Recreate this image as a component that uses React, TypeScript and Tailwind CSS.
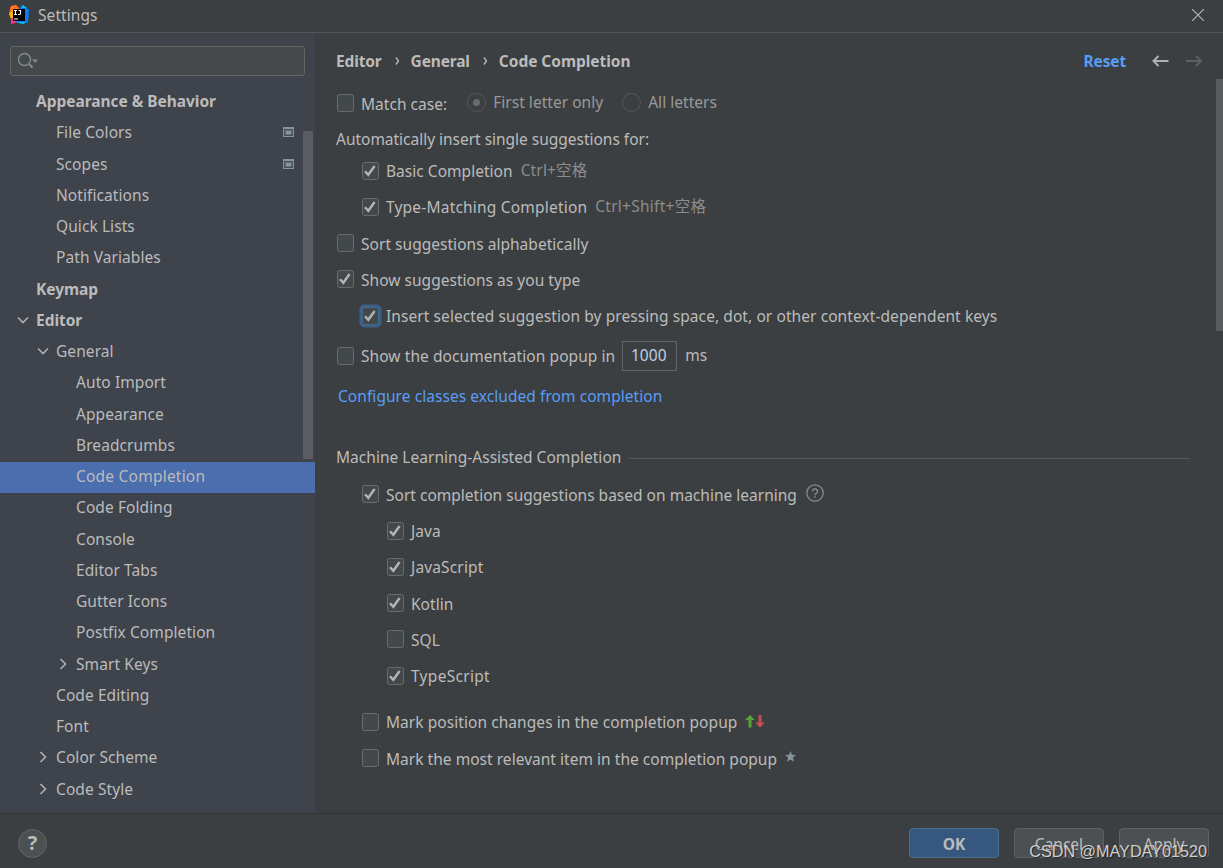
import clsx from 'clsx';
import type { ReactNode } from 'react';

interface TreeItem {
  label: string;
  level: number;
  bold?: boolean;
  arrow?: 'open' | 'closed';
  project?: boolean;
  selected?: boolean;
}

const treeItems: TreeItem[] = [
  { label: 'Appearance & Behavior', level: 0, bold: true },
  { label: 'File Colors', level: 1, project: true },
  { label: 'Scopes', level: 1, project: true },
  { label: 'Notifications', level: 1 },
  { label: 'Quick Lists', level: 1 },
  { label: 'Path Variables', level: 1 },
  { label: 'Keymap', level: 0, bold: true },
  { label: 'Editor', level: 0, bold: true, arrow: 'open' },
  { label: 'General', level: 1, arrow: 'open' },
  { label: 'Auto Import', level: 2 },
  { label: 'Appearance', level: 2 },
  { label: 'Breadcrumbs', level: 2 },
  { label: 'Code Completion', level: 2, selected: true },
  { label: 'Code Folding', level: 2 },
  { label: 'Console', level: 2 },
  { label: 'Editor Tabs', level: 2 },
  { label: 'Gutter Icons', level: 2 },
  { label: 'Postfix Completion', level: 2 },
  { label: 'Smart Keys', level: 2, arrow: 'closed' },
  { label: 'Code Editing', level: 1 },
  { label: 'Font', level: 1 },
  { label: 'Color Scheme', level: 1, arrow: 'closed' },
  { label: 'Code Style', level: 1, arrow: 'closed' },
];

const levelPadding = ['pl-4', 'pl-9', 'pl-14'];

function Logo() {
  return (
    <svg width="20" height="20" viewBox="0 0 20 20">
      <path d="M1 2 7 0l5 4-3 13-6 2-1-6-2-3z" fill="#fe315d" />
      <path d="M2 1 7 0l3 4-6 4-3-1z" fill="#f97a12" />
      <path d="M0 8l4-2v7l-2 1z" fill="#fdb60d" />
      <path d="M2 13h5v4l-5 2z" fill="#ff318c" />
      <path d="M11 3 14 0l6 5-1 12-5 2-7-2z" fill="#087cfa" />
      <path d="M12 3 14 0l4 3z" fill="#07c3f2" />
      <path d="M7 17h10l-3 2z" fill="#07c3f2" />
      <path d="M4 4h12v12H4z" fill="#000" />
      <path d="M5 5.500h3M6.500 5.500v4M5 9.500h3M9.500 5.500h2v3q0 1-1.200 1H9M5 14h4" stroke="#fff" strokeWidth="1.100" fill="none" />
    </svg>
  );
}

function Arrow({ open }: { open: boolean }) {
  return (
    <svg width="14" height="14" viewBox="0 0 14 14" fill="none" stroke="#adadad" strokeWidth="1.700">
      <path d={open ? 'M2 4.500 7 9.500 12 4.500' : 'M4.500 2 9.500 7 4.500 12'} />
    </svg>
  );
}

function ProjectIcon() {
  return (
    <svg width="11" height="10" viewBox="0 0 11 10" className="mr-[21px]">
      <path d="M0 0h11v10H0z" fill="#87939a" />
      <path d="M1 2h9v7H1z" fill="#4a5058" />
      <path d="M2.500 3.500h6v4h-6z" fill="#87939a" />
    </svg>
  );
}

function Tree() {
  return (
    <div className="mt-[10.600px]">
      {treeItems.map((item, i) => (
        <div
          key={i}
          className={clsx(
            'flex h-[31.250px] items-center pb-0.5',
            levelPadding[item.level],
            item.selected && 'bg-[#4b6eaf]'
          )}
        >
          <span className="flex w-5 shrink-0">{item.arrow && <Arrow open={item.arrow === 'open'} />}</span>
          <span
            className={clsx(
              'flex-1',
              item.bold ? 'font-bold tracking-[-0.040px]' : item.selected ? 'tracking-[0.220px]' : 'tracking-[0.080px]'
            )}
          >
            {item.label}
          </span>
          {item.project && <ProjectIcon />}
        </div>
      ))}
    </div>
  );
}

function Sidebar() {
  return (
    <div className="relative w-[315px] shrink-0 overflow-hidden bg-[#3f434b] pt-[13px]">
      <div className="ml-2.5 flex h-[30px] w-[295px] items-center rounded-[3px] border border-[#646464] bg-[#45494a] pl-[7px]">
        <svg width="22" height="18" viewBox="0 0 22 18" fill="none">
          <circle cx="6.500" cy="7.500" r="6" stroke="#7f8b91" strokeWidth="1.400" />
          <path d="m11 12 3.500 3.500" stroke="#7f8b91" strokeWidth="2" />
          <path d="M14 7.500h6l-3 3.500z" fill="#7f8b91" />
        </svg>
      </div>
      <Tree />
      <div className="absolute top-[98px] left-[303px] h-[328px] w-2.5 bg-[#5a5d64]" />
    </div>
  );
}

function CheckBox({ checked, focused }: { checked?: boolean; focused?: boolean }) {
  return (
    <span
      className={clsx(
        'mr-px ml-[0.500px] flex h-[18px] w-[17.500px] shrink-0 items-center justify-center rounded-[2.500px] border bg-[#43494a]',
        focused ? 'border-[#43698e] ring-[2.500px] ring-[#3d6185]' : 'border-[#6b6b6b]'
      )}
    >
      {checked && (
        <svg width="14" height="14" viewBox="0 0 14 14" fill="none" stroke="#b4b4b4" strokeWidth="2.400">
          <path d="m2 7.300 3.300 3.500L11.600 2" />
        </svg>
      )}
    </span>
  );
}

interface OptionProps {
  label: string;
  checked?: boolean;
  focused?: boolean;
  className?: string;
  labelClass?: string;
  children?: ReactNode;
}

function Option({ label, checked, focused, className, labelClass, children }: OptionProps) {
  return (
    <div className={clsx('flex h-9 shrink-0 items-center', className)}>
      <CheckBox checked={checked} focused={focused} />
      <span className={clsx('ml-1.5', labelClass)}>{label}</span>
      {children}
    </div>
  );
}

function Radio({ label, selected }: { label: string; selected?: boolean }) {
  return (
    <span className="flex items-center text-[#999]">
      <span className="mr-[7px] flex h-[19px] w-[19px] items-center justify-center rounded-full border border-[#565656]">
        {selected && <span className="h-[7px] w-[7px] rounded-full bg-[#6b6b6b]" />}
      </span>
      <span className="pb-px">{label}</span>
    </span>
  );
}

function Chevron() {
  return (
    <svg width="5" height="8" viewBox="0 0 5 8" fill="none" stroke="#bbb" strokeWidth="1.300" className="mr-[11px] ml-[13px]">
      <path d="m1 .5 2.500 3.500L1 7.500" />
    </svg>
  );
}

function Breadcrumbs() {
  return (
    <div className="flex h-[52px] shrink-0 items-center pt-[3px] font-bold tracking-[-0.150px]">
      <span>Editor</span>
      <Chevron />
      <span>General</span>
      <Chevron />
      <span className="tracking-[-0.040px]">Code Completion</span>
      <span className="ml-auto text-[#589df6]">Reset</span>
      <svg width="52" height="16" viewBox="0 0 52 16" fill="none" strokeWidth="2" className="mr-5 ml-[25px]">
        <path d="M17.500 8h-15M7.500 3l-5 5 5 5" stroke="#afb1b3" />
        <path d="M35 8h15M45 3l5 5-5 5" stroke="#5d5f60" />
      </svg>
    </div>
  );
}

function CompletionPage() {
  return (
    <div className="relative flex flex-1 flex-col overflow-hidden pl-[21px]">
      <Breadcrumbs />
      <Option label="Match case:" labelClass="pt-px">
        <div className="ml-5 flex gap-[19px] pb-px">
          <Radio label="First letter only" selected />
          <Radio label="All letters" />
        </div>
      </Option>
      <div className="flex h-9 shrink-0 items-center tracking-[-0.020px]">
        Automatically insert single suggestions for:
      </div>
      <Option label="Basic Completion" checked className="-mt-1 ml-[25px]">
        <span className="ml-2 pb-0.5 tracking-[0.150px] text-[#8c8c8c]">Ctrl+空格</span>
      </Option>
      <Option label="Type-Matching Completion" checked className="ml-[25px]" labelClass="tracking-[0.200px]">
        <span className="ml-2 pb-0.5 tracking-[0.260px] text-[#8c8c8c]">Ctrl+Shift+空格</span>
      </Option>
      <Option label="Sort suggestions alphabetically" labelClass="pt-0.5" />
      <Option label="Show suggestions as you type" checked labelClass="pt-0.5" />
      <Option
        label="Insert selected suggestion by pressing space, dot, or other context-dependent keys"
        checked
        focused
        className="mt-px ml-[25px]"
        labelClass="tracking-[0.080px]"
      />
      <Option label="Show the documentation popup in" className="mt-1" labelClass="tracking-[0.070px]">
        <span className="ml-[7px] flex h-[30px] w-[55px] items-center justify-center border border-[#646464] pr-0.5 pb-0.5 text-[#bfd0e6]">
          1000
        </span>
        <span className="ml-2 pb-0.5">ms</span>
      </Option>
      <div className="mt-1 flex h-9 shrink-0 items-center pl-0.5 tracking-[0.060px] text-[#589df6]">
        Configure classes excluded from completion
      </div>

      <div className="mt-[26px] mr-[33px] flex h-9 shrink-0 items-center gap-2">
        <span className="pb-0.5">Machine Learning-Assisted Completion</span>
        <span className="h-px flex-1 bg-[#555758]" />
      </div>
      <Option
        label="Sort completion suggestions based on machine learning"
        checked
        className="ml-[25px]"
        labelClass="pt-0.5 tracking-[0.010px]"
      >
        <svg width="18" height="18" viewBox="0 0 18 18" fill="none" stroke="#7f8b91" strokeWidth="1.300" className="mb-0.5 ml-[9px]">
          <circle cx="9" cy="9" r="8.200" />
          <path d="M6.500 7.200a2.500 2.300 0 1 1 4 1.900Q9 10 9 11.200M9 12.300v1.500" strokeWidth="1.500" />
        </svg>
      </Option>
      <Option label="Java" checked className="mt-px ml-[50px]" />
      <Option label="JavaScript" checked className="ml-[50px]" labelClass="tracking-[0.150px]" />
      <Option label="Kotlin" checked className="ml-[50px]" labelClass="pt-0.5" />
      <Option label="SQL" className="ml-[50px]" labelClass="pt-0.5" />
      <Option label="TypeScript" checked className="mt-px ml-[50px]" labelClass="tracking-[0.300px]" />
      <Option
        label="Mark position changes in the completion popup"
        className="mt-2.5 ml-[25px]"
        labelClass="tracking-[0.060px]"
      >
        <svg width="20" height="13" viewBox="0 0 20 13" className="mb-0.5 ml-2">
          <path d="M5 0 10 5H6.500v7.500h-3V5H0z" fill="#57a23b" />
          <path d="M13.500 0h3v7.500H20l-5 5-5-5h3.500z" fill="#bd5050" />
        </svg>
      </Option>
      <Option
        label="Mark the most relevant item in the completion popup"
        className="ml-[25px]"
        labelClass="pt-0.5"
      >
        <svg width="11" height="11" viewBox="0 0 10 10" className="mb-[3px] ml-2">
          <path d="m5 0 1.300 3.300 3.700.3-2.800 2.300.9 3.900L5 7.700 1.900 9.800l.9-3.900L0 3.600l3.700-.3z" fill="#87939a" />
        </svg>
      </Option>
      <div className="absolute top-[46px] right-0 h-[252px] w-[7px] bg-[#595b5d]" />
    </div>
  );
}

function Footer() {
  return (
    <div className="relative flex h-[55px] shrink-0 items-center border-t border-[#323232] pt-1 pr-3.5 pl-[18px] tracking-normal">
      <span className="flex h-[29px] w-[29px] items-center justify-center rounded-full border border-[#646667] bg-[#4c5052] text-xl font-bold">
        ?
      </span>
      <div className="ml-auto flex gap-[15px]">
        <button className="h-[30px] w-[90px] rounded border border-[#4c708c] bg-[#365880] pt-px font-bold">OK</button>
        <button className="h-[30px] w-[90px] rounded border border-[#5e6060] bg-[#4c5052] pt-px">Cancel</button>
        <button className="h-[30px] w-[90px] rounded border border-[#5e6060] bg-[#4c5052] pt-px">Apply</button>
      </div>
      <span className="absolute top-[25px] right-4 font-['Liberation_Sans'] text-[16.200px] leading-6 text-[#cfcfcf] [text-shadow:1px_1px_1px_#222]">
        CSDN @MAYDAY01520
      </span>
    </div>
  );
}

export default function App() {
  return (
    <div className="flex h-[868px] w-[1223px] flex-col overflow-hidden bg-[#3c3f41] font-['Noto_Sans','Noto_Sans_CJK_SC',sans-serif] text-[15.500px] leading-5 tracking-[0.030px] whitespace-nowrap text-[#bbb]">
      <div className="flex h-[33px] shrink-0 items-center border-b border-[#555] pb-0.5 pl-[9px]">
        <Logo />
        <span className="ml-[9px] tracking-[0.080px]">Settings</span>
        <svg width="12" height="12" viewBox="0 0 12 12" stroke="#b4b4b4" strokeWidth="1.200" className="mr-[19px] ml-auto">
          <path d="m0 0 12 12M12 0 0 12" />
        </svg>
      </div>
      <div className="flex min-h-0 flex-1">
        <Sidebar />
        <CompletionPage />
      </div>
      <Footer />
    </div>
  );
}
